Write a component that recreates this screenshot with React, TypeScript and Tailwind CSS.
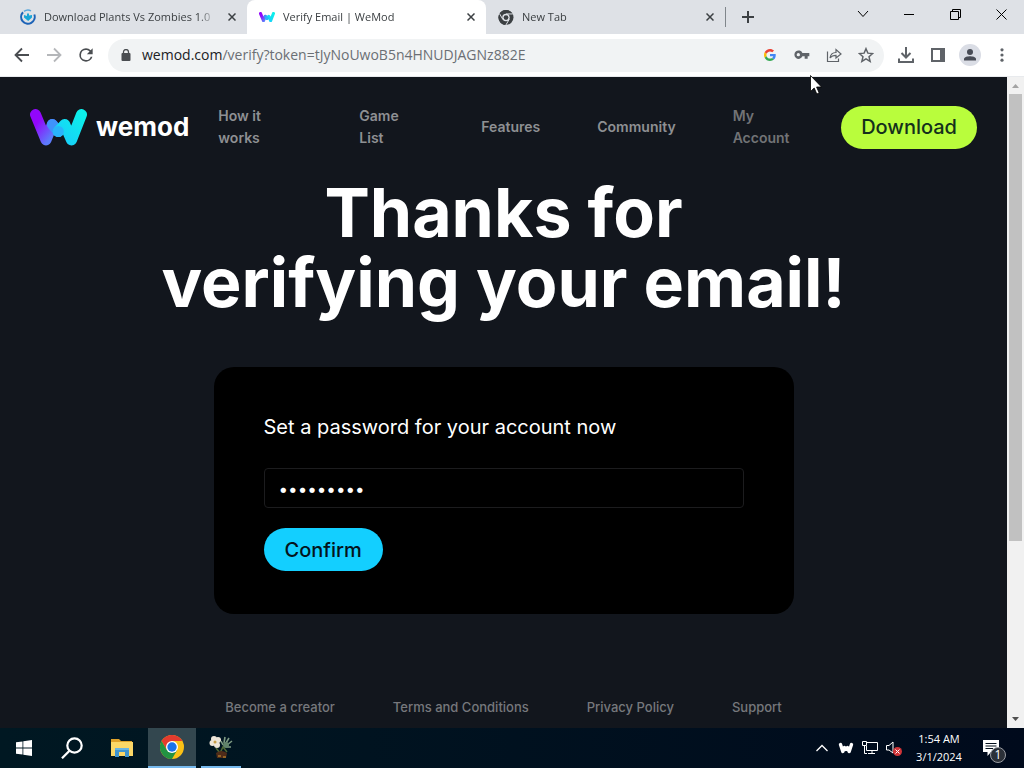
import React, { useState } from 'react';

const uiFont = "font-['Open_Sans','Noto_Sans',sans-serif]";

interface IconProps {
  className?: string;
}

const WeModMark: React.FC<IconProps> = ({ className }) => (
  <svg viewBox="0 0 57 37" className={className} aria-hidden="true">
    <defs>
      <linearGradient id="wm-left" x1="0" y1="0" x2="0.8" y2="1">
        <stop offset="0.25" stopColor="#9207fb" />
        <stop offset="1" stopColor="#5c7bfc" />
      </linearGradient>
      <linearGradient id="wm-right" x1="1" y1="0" x2="0" y2="1">
        <stop offset="0" stopColor="#0cf0ea" />
        <stop offset="1" stopColor="#19cdfb" />
      </linearGradient>
    </defs>
    <g fill="none" strokeLinecap="round" strokeLinejoin="round" strokeWidth="11">
      <path d="M5.500 5.500 L16 31 L22.300 15.500" stroke="url(#wm-left)" />
      <path d="M22.300 15.500 L28.300 22.500" stroke="#3f93fb" />
      <path d="M28.300 22.500 L34.700 15.500 L41.500 31 L51.500 5.500" stroke="url(#wm-right)" />
      <path d="M28.300 22.500 L28.300 22.500" stroke="#2ab4fb" />
    </g>
  </svg>
);

const ChromeLogo: React.FC<IconProps & { mono?: boolean }> = ({ className, mono }) => (
  <svg viewBox="0 0 24 24" className={className} aria-hidden="true">
    <circle cx="12" cy="12" r="12" fill={mono ? '#3c4043' : '#fbc116'} />
    <path d="M1.600 6 A12 12 0 0 1 22.400 6 L12 6 L6.800 15z" fill={mono ? '#3c4043' : '#e33b2e'} />
    <path d="M1.600 6 A12 12 0 0 0 12 24 L17.200 15 L6.800 15z" fill={mono ? '#3c4043' : '#229342'} />
    {mono && (
      <path d="M12 6.300H22.600M6.900 15L1.600 5.800M17.100 15L11.800 24" stroke="#dee1e6" strokeWidth="1.600" />
    )}
    <circle cx="12" cy="12" r="6" fill={mono ? '#dee1e6' : '#fff'} />
    <circle cx="12" cy="12" r={mono ? 3.8 : 4.7} fill={mono ? '#3c4043' : '#1a73e8'} />
  </svg>
);

const DownloadSiteIcon: React.FC<IconProps> = ({ className }) => (
  <svg viewBox="0 0 16 16" className={className} fill="none" aria-hidden="true">
    <path d="M3 3.200 A6.800 6.800 0 1 0 14.300 5.500" stroke="#1c63b7" strokeWidth="2" />
    <path d="M4 2.400 A6.800 6.800 0 0 1 11 1.800" stroke="#5aa7dc" strokeWidth="1.500" />
    <path d="M7 4.500h2v2l3-.5v2.500L8.200 12 4 8.500V6l3 1z" fill="#18a6d6" />
  </svg>
);

const GoogleG: React.FC<IconProps> = ({ className }) => (
  <svg viewBox="0 0 48 48" className={className} aria-hidden="true">
    <path fill="#EA4335" d="M24 9.500c3.540 0 6.710 1.220 9.210 3.600l6.850-6.850C35.900 2.380 30.470 0 24 0 14.620 0 6.510 5.380 2.560 13.220l7.980 6.190C12.430 13.720 17.740 9.500 24 9.500z" />
    <path fill="#4285F4" d="M46.980 24.550c0-1.570-.15-3.090-.38-4.550H24v9.020h12.940c-.58 2.960-2.260 5.480-4.780 7.180l7.730 6c4.510-4.180 7.090-10.360 7.090-17.650z" />
    <path fill="#FBBC05" d="M10.530 28.590c-.48-1.450-.76-2.990-.76-4.590s.27-3.140.76-4.590l-7.980-6.190C.92 16.460 0 20.120 0 24c0 3.880.92 7.540 2.560 10.780l7.970-6.190z" />
    <path fill="#34A853" d="M24 48c6.480 0 11.930-2.130 15.890-5.810l-7.730-6c-2.150 1.450-4.920 2.300-8.160 2.300-6.260 0-11.570-4.220-13.470-9.910l-7.980 6.190C6.510 42.620 14.620 48 24 48z" />
  </svg>
);

const CloseIcon: React.FC<IconProps> = ({ className }) => (
  <svg viewBox="0 0 8 8" className={className} stroke="currentColor" strokeWidth="1.500" aria-hidden="true">
    <path d="M0.500 0.500 L7.500 7.500 M7.500 0.500 L0.500 7.500" />
  </svg>
);

interface TabProps {
  title: string;
  icon: React.ReactNode;
  active?: boolean;
}

const Tab: React.FC<TabProps> = ({ title, icon, active }) => (
  <div
    className={`flex h-[34px] w-[239px] shrink-0 items-center gap-2 pl-3 pr-[11px] ${
      active ? 'rounded-t-lg bg-white' : ''
    }`}
  >
    {icon}
    <span className="min-w-0 flex-1 overflow-hidden whitespace-nowrap text-[11px] leading-4 text-[#3c4043] [mask-image:linear-gradient(to_right,black_90%,transparent)]">
      {title}
    </span>
    <button aria-label={`Close ${title}`} className="ml-1 text-[#3c4043]">
      <CloseIcon className="h-2 w-2" />
    </button>
  </div>
);

const TabStrip: React.FC = () => (
  <div className="flex h-[34px] shrink-0 items-center bg-[#dee1e6] pl-2">
    <Tab title="Download Plants Vs Zombies 1.0" icon={<DownloadSiteIcon className="h-4 w-4 shrink-0" />} />
    <Tab active title="Verify Email | WeMod" icon={<WeModMark className="w-4 shrink-0" />} />
    <Tab title="New Tab" icon={<ChromeLogo mono className="h-[15px] w-4 shrink-0" />} />
    <div className="h-5 w-px bg-[#80868b]" />
    <button aria-label="New tab" className="ml-4 text-[#3c4043]">
      <svg viewBox="0 0 12 12" className="h-3 w-3" stroke="currentColor" strokeWidth="2">
        <path d="M6 0V12M0 6H12" />
      </svg>
    </button>
    <div className="ml-auto flex h-7 items-center self-start text-black">
      <button aria-label="Search tabs" className="flex w-[46px] justify-center">
        <svg viewBox="0 0 12 8" className="h-2 w-3" fill="none" stroke="currentColor">
          <path d="M1 1L6 6.500L11 1" />
        </svg>
      </button>
      <button aria-label="Minimize" className="flex w-[46px] justify-center">
        <span className="h-px w-[10px] bg-black" />
      </button>
      <button aria-label="Restore" className="flex w-[46px] justify-center">
        <svg viewBox="0 0 11 11" className="h-[11px] w-[11px]" fill="none" stroke="currentColor">
          <path d="M.5 2.500H8.500V10.500H.5zM2.500 2.500V.5H10.500V8.500H8.500" />
        </svg>
      </button>
      <button aria-label="Close" className="flex w-[46px] justify-center">
        <svg viewBox="0 0 11 11" className="h-[11px] w-[11px]" fill="none" stroke="currentColor">
          <path d="M.5 .5L10.500 10.500M10.500 .5L.5 10.500" />
        </svg>
      </button>
    </div>
  </div>
);

const Toolbar: React.FC = () => (
  <div className="flex h-[43px] shrink-0 items-center border-b border-[#e8eaed] bg-white pl-[14px] pr-[14px] text-[#5f6368]">
    <div className="flex items-center gap-4">
      <button aria-label="Back">
        <svg viewBox="0 0 16 16" className="h-4 w-4" fill="none" stroke="#4a4d51" strokeWidth="1.800">
          <path d="M15 8H2M8 1.500L1.500 8L8 14.500" />
        </svg>
      </button>
      <button aria-label="Forward">
        <svg viewBox="0 0 16 16" className="h-4 w-4" fill="none" stroke="#b5b7ba" strokeWidth="1.800">
          <path d="M1 8H14M8 1.500L14.500 8L8 14.500" />
        </svg>
      </button>
      <button aria-label="Reload">
        <svg viewBox="0 0 24 24" className="-m-0.5 h-5 w-5" fill="#4a4d51">
          <path d="M17.650 6.350A7.960 7.960 0 0 0 12 4a8 8 0 1 0 7.730 10h-2.080A6 6 0 1 1 12 6c1.660 0 3.140.69 4.220 1.780L13 11h7V4z" />
        </svg>
      </button>
    </div>
    <div className="ml-[14px] flex h-[33px] flex-1 items-center rounded-full bg-[#f1f3f4] pl-[13px] pr-[10px]">
      <svg viewBox="0 0 10 12" className="h-3 w-[10px] shrink-0" fill="none" aria-hidden="true">
        <rect x="0.500" y="4" width="9" height="8" rx="1" fill="#4a4d51" />
        <path d="M2.500 5V3a2.500 2.500 0 0 1 5 0V5" stroke="#4a4d51" strokeWidth="1.300" />
      </svg>
      <span className="ml-[11px] flex-1 whitespace-nowrap text-sm text-[#6b6f74]">
        <span className="text-[#202124]">wemod.com</span>/verify?token=tJyNoUwoB5n4HNUDJAGNz882E
      </span>
      <div className="flex items-center gap-4">
        <button aria-label="Search with Google" className="flex w-4 justify-center">
          <GoogleG className="h-3 w-3" />
        </button>
        <button aria-label="Passwords">
          <svg viewBox="0 0 24 24" className="h-4 w-4" fill="currentColor">
            <path d="M12.650 9A6.300 6.300 0 1 0 12.650 14H16V17.500H20.500V14H23V9zM6.500 14a2.500 2.500 0 1 1 0-5 2.500 2.500 0 0 1 0 5z" />
          </svg>
        </button>
        <button aria-label="Share">
          <svg viewBox="0 0 16 16" className="h-4 w-4" fill="none" stroke="currentColor" strokeWidth="1.200">
            <path d="M1.500 4.500V14.500H12.500V11.500M4 11C4.500 7.500 6.500 5.500 10 5.500V2.500L15 7L10 11V8.300C7.500 8.300 5.500 9 4 11z" />
          </svg>
        </button>
        <button aria-label="Bookmark this tab">
          <svg viewBox="0 0 24 24" className="h-4 w-4" fill="none" stroke="currentColor" strokeWidth="2.200">
            <path d="M12 2.500L14.800 9.200L22 9.800L16.500 14.500L18.200 21.500L12 17.700L5.800 21.500L7.500 14.500L2 9.800L9.200 9.200z" />
          </svg>
        </button>
      </div>
    </div>
    <div className="ml-[14px] flex items-center gap-4">
      <button aria-label="Downloads">
        <svg viewBox="0 0 16 16" className="h-4 w-4" fill="none" stroke="currentColor" strokeWidth="2">
          <path d="M8 0V10.500M3.500 6L8 10.500L12.500 6M1 11.500V15H15V11.500" />
        </svg>
      </button>
      <button aria-label="Side panel">
        <svg viewBox="0 0 14 14" className="mx-px h-[14px] w-[14px]" fill="none">
          <path d="M1 1H13V13H1z" stroke="currentColor" strokeWidth="2" />
          <path d="M9 1H13V13H9z" fill="currentColor" />
        </svg>
      </button>
      <button aria-label="Profile" className="-mx-[3px] flex h-[22px] w-[22px] items-center justify-center rounded-full bg-[#dadde5]">
        <svg viewBox="0 0 14 14" className="h-[14px] w-[14px]" fill="#474b55">
          <circle cx="7" cy="4" r="3" />
          <path d="M1 12.500V11C1 9 5 8.300 7 8.300S13 9 13 11V12.500z" />
        </svg>
      </button>
      <button aria-label="Menu">
        <svg viewBox="0 0 16 16" className="h-4 w-4" fill="currentColor">
          <circle cx="8" cy="2.800" r="1.600" />
          <circle cx="8" cy="8" r="1.600" />
          <circle cx="8" cy="13.200" r="1.600" />
        </svg>
      </button>
    </div>
  </div>
);

const SiteHeader: React.FC = () => (
  <header className="flex items-center px-[30px] pt-7">
    <a href="#home" className="flex items-center gap-[9px] text-white">
      <WeModMark className="w-[57px] shrink-0" />
      <span className="text-[26px] font-bold leading-8">wemod</span>
    </a>
    <nav className="ml-[29px] flex items-center gap-[57px] text-sm font-semibold leading-[22px] text-[#8e9093]">
      <a href="#how" className="w-[84px] pr-8">How it works</a>
      <a href="#games" className="w-[65px] pr-4">Game List</a>
      <a href="#features">Features</a>
      <a href="#community">Community</a>
      <a href="#account" className="w-[60px] text-[#717376]">My Account</a>
    </nav>
    <button className="ml-auto h-[43px] rounded-full bg-[#b9fd3c] px-5 text-xl font-medium text-[#14301c]">
      Download
    </button>
  </header>
);

const PasswordCard: React.FC = () => {
  const [password, setPassword] = useState('password1');

  return (
    <form
      onSubmit={(e) => e.preventDefault()}
      className="mt-[50px] w-[580px] max-w-full rounded-[20px] bg-black px-[50px] pb-[43px] pt-[45px]"
    >
      <label htmlFor="password" className="block text-xl leading-[30px] text-white">
        Set a password for your account now
      </label>
      <input
        id="password"
        type="password"
        value={password}
        onChange={(e) => setPassword(e.target.value)}
        className="mt-[26px] block h-10 w-full rounded border border-[#1c1c1e] bg-black px-[14px] pt-0.5 text-[17px] text-white outline-none"
      />
      <button type="submit" className="mt-5 block h-[43px] rounded-full bg-[#13cfff] px-[21px] text-xl font-medium text-[#04141c]">
        Confirm
      </button>
    </form>
  );
};

const footerLinks = ['Become a creator', 'Terms and Conditions', 'Privacy Policy', 'Support'];

const Scrollbar: React.FC = () => (
  <div className="flex w-[17px] shrink-0 flex-col items-center bg-[#f1f1f1]" aria-hidden="true">
    <svg viewBox="0 0 17 17" className="h-[17px] w-[17px] shrink-0">
      <path d="M5 11L8.500 7L12 11z" fill="#a3a3a3" />
    </svg>
    <div className="flex w-[13px] flex-1 flex-col">
      <div className="h-[72.500%] bg-[#c1c1c1]" />
    </div>
    <svg viewBox="0 0 17 17" className="h-[17px] w-[17px] shrink-0">
      <path d="M5 6L8.500 10L12 6z" fill="#505050" />
    </svg>
  </div>
);

const Taskbar: React.FC = () => (
  <div className="flex h-10 shrink-0 items-stretch bg-linear-to-r from-[#001822] to-[#000a1c] text-white">
    <button aria-label="Start" className="flex w-12 items-center justify-center">
      <svg viewBox="0 0 16 16" className="h-4 w-4" fill="#fff">
        <path d="M0 2.300L6.500 1.400V7.600H0zM7.300 1.300L16 0V7.600H7.300zM0 8.400H6.500V14.600L0 13.700zM7.300 8.400H16V16L7.300 14.700z" />
      </svg>
    </button>
    <button aria-label="Search" className="flex w-12 items-center justify-center">
      <svg viewBox="0 0 22 22" className="h-[22px] w-[22px]" fill="none" stroke="#fff" strokeWidth="2.200">
        <circle cx="13.500" cy="8.500" r="7.200" />
        <path d="M8.500 13.700L1 21.300" />
      </svg>
    </button>
    <button aria-label="File Explorer" className="flex w-[52px] items-center justify-center">
      <svg viewBox="0 0 22 18" className="h-[18px] w-[22px]">
        <path d="M0 0H8L10 2H21V5H0z" fill="#e0a22a" />
        <path d="M0 3H22V17H0z" fill="#fbd767" />
        <path d="M4 9H18V18H14V13H8V18H4z" fill="#3f94cf" />
        <path d="M4 9H18V11H4z" fill="#69b4e2" />
      </svg>
    </button>
    <button aria-label="Google Chrome" className="flex w-12 items-center justify-center border-b-2 border-[#76b9ed] bg-[#33474f]">
      <ChromeLogo className="h-6 w-6" />
    </button>
    <button aria-label="Plants vs. Zombies" className="mx-[5px] flex w-10 items-center justify-center border-b-2 border-[#76b9ed]">
      <svg viewBox="0 0 24 24" className="h-6 w-6">
        <path d="M7 13L11 18L14 12L18 17" stroke="#4f6a35" strokeWidth="1.500" fill="none" />
        <path d="M7 18Q12 14 18 18L17 23H8z" fill="#4f2c19" />
        <path d="M9 21h3M14 22h3" stroke="#a97428" strokeWidth="1.500" />
        <g fill="#eee6d8">
          <circle cx="5" cy="4" r="3" />
          <circle cx="9" cy="5" r="3" />
          <circle cx="3.500" cy="8" r="3" />
          <circle cx="8" cy="10" r="3" />
        </g>
        <circle cx="6" cy="7" r="1.500" fill="#c79e48" />
        <path d="M15 8L16 2M17 8L20 3M18 10L23 6M17 12L22 12M14 10L12 6" stroke="#7e9b83" strokeWidth="1.600" />
        <circle cx="17" cy="10" r="3" fill="#61836a" />
      </svg>
    </button>
    <div className="ml-auto flex items-center">
      <div className="flex items-center gap-2">
        <button aria-label="Show hidden icons" className="flex w-4 justify-center">
          <svg viewBox="0 0 12 8" className="h-2 w-3" fill="none" stroke="#fff" strokeWidth="1.300">
            <path d="M.5 7L6 1.500L11.500 7" />
          </svg>
        </button>
        <svg viewBox="0 0 16 12" className="h-3 w-4" fill="none" stroke="#fff" strokeWidth="3.400" strokeLinejoin="round" strokeLinecap="round">
          <path d="M2.500 2.500L4.800 9.500L6.500 5.500L8 7.500L9.500 5.500L11.200 9.500L13.500 2.500" />
        </svg>
        <svg viewBox="0 0 16 16" className="h-4 w-4" fill="none" stroke="#fff">
          <path d="M5 2.500H15.500V10.500H4.500V6M10 10.500V13.500M6 13.500H13M.5 1.500H4.500V5.500H.5zM2.500 5.500V13.500H5" />
        </svg>
        <svg viewBox="0 0 16 16" className="h-4 w-4" fill="none">
          <path d="M.5 5.500H3L7 2V13L3 10H.5z" stroke="#fff" />
          <circle cx="11.500" cy="11.500" r="4.500" fill="#d13438" />
          <path d="M9.500 9.500L13.500 13.500M13.500 9.500L9.500 13.500" stroke="#fff" />
        </svg>
      </div>
      <div className="ml-3 w-[50px] text-center text-[11px] leading-[18px]">
        <div>1:54 AM</div>
        <div>3/1/2024</div>
      </div>
      <button aria-label="Notifications, 1 new" className="relative ml-[19px] mr-[23px] flex w-[18px] items-center">
        <svg viewBox="0 0 16 16" className="h-4 w-4">
          <path d="M0 0H16V12H8L4.500 16V12H0z" fill="#fff" />
          <path d="M2.500 3.500H13.500M2.500 6H13.500M2.500 8.500H10" stroke="#04101d" />
        </svg>
        <span className="absolute left-[7px] top-[7px] flex h-4 w-4 items-center justify-center rounded-full border border-[#9a9da3] bg-[#2b3038] text-xs leading-none">
          1
        </span>
      </button>
    </div>
  </div>
);

const App: React.FC = () => (
  <div className={`relative flex h-screen flex-col overflow-hidden ${uiFont}`}>
    <TabStrip />
    <Toolbar />
    <div className="flex min-h-0 flex-1">
      <main className="flex min-w-0 flex-1 flex-col overflow-hidden bg-[#12161d] font-['Inter',sans-serif]">
        <SiteHeader />
        <div className="flex flex-col items-center">
          <h1 className="mt-7 text-center text-[68px] font-bold leading-[70px] text-white">
            Thanks for
            <br />
            verifying your email!
          </h1>
          <PasswordCard />
        </div>
        <footer className="mt-[82px] flex justify-center gap-[58px] whitespace-nowrap text-[13px] font-medium leading-[22px] text-[#76787c]">
          {footerLinks.map((label) => (
            <a key={label} href="#footer">
              {label}
            </a>
          ))}
        </footer>
      </main>
      <Scrollbar />
    </div>
    <Taskbar />
    <svg viewBox="0 0 12 20" className="pointer-events-none absolute left-[810px] top-[75px] h-5 w-3" aria-hidden="true">
      <path d="M.5 .5V16.500L4.200 13L6.800 19L9.200 18L6.600 12H11.500z" fill="#fff" stroke="#000" strokeWidth="0.800" />
    </svg>
  </div>
);

export default App;
